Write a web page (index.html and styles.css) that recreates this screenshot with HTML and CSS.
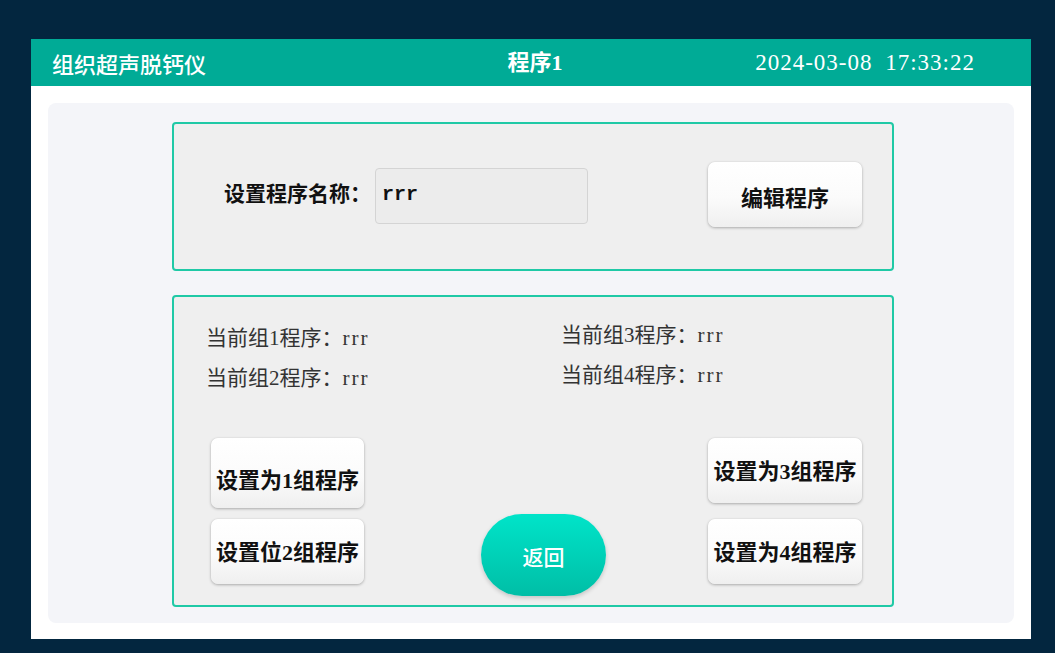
FILE: index.html
```html
<!DOCTYPE html>
<html lang="zh-CN">
<head>
<meta charset="utf-8">
<title>组织超声脱钙仪</title>
<link rel="stylesheet" href="styles.css">
</head>
<body>
<div class="card">
  <header class="topbar">
    <div class="title">组织超声脱钙仪</div>
    <div class="program">程序1</div>
    <div class="clock">2024-03-08 17:33:22</div>
  </header>
  <main class="body">
    <div class="panel">
      <section class="box box-name">
        <span class="label">设置程序名称：</span>
        <div class="input">rrr</div>
        <button class="btn btn-edit">编辑程序</button>
      </section>
      <section class="box box-groups">
        <div class="info">
          <div class="info-col">
            <div class="info-row">当前组1程序：<span class="val">rrr</span></div>
            <div class="info-row">当前组2程序：<span class="val">rrr</span></div>
          </div>
          <div class="info-col info-col-right">
            <div class="info-row">当前组3程序：<span class="val">rrr</span></div>
            <div class="info-row">当前组4程序：<span class="val">rrr</span></div>
          </div>
        </div>
        <div class="actions">
          <div class="btn-group btn-group-left">
            <button class="btn btn-set btn-tall">设置为1组程序</button>
            <button class="btn btn-set">设置位2组程序</button>
          </div>
          <button class="back">返回</button>
          <div class="btn-group btn-group-right">
            <button class="btn btn-set">设置为3组程序</button>
            <button class="btn btn-set">设置为4组程序</button>
          </div>
        </div>
      </section>
    </div>
  </main>
</div>
</body>
</html>
```
FILE: styles.css
```css
* { box-sizing: border-box; }

html, body {
  margin: 0;
  background: #03263f;
}

body {
  padding: 39px 24px 14px 31px;
  font-family: "Liberation Serif", "Noto Sans CJK SC", serif;
}

.card {
  width: 1000px;
  height: 600px;
  background: #ffffff;
  display: flex;
  flex-direction: column;
}

.topbar {
  height: 47px;
  flex: none;
  background: #00ab96;
  color: #ffffff;
  display: grid;
  grid-template-columns: 1fr auto 1fr;
  align-items: center;
  padding: 0 21px;
}

.title {
  font-family: "Noto Sans CJK SC", sans-serif;
  font-size: 22px;
  font-weight: 500;
  line-height: 1;
}

.program {
  margin-left: 8px;
  font-family: "Liberation Serif", "Noto Sans CJK SC", serif;
  font-size: 22px;
  font-weight: 700;
  line-height: 1;
}

.clock {
  justify-self: end;
  margin-right: 35px;
  font-family: "Liberation Serif", serif;
  font-size: 23px;
  letter-spacing: 1px;
  word-spacing: 6px;
  line-height: 1;
}

.body {
  flex: 1;
  padding: 17px 17px 16px 17px;
}

.panel {
  height: 100%;
  background: #f4f5f9;
  border-radius: 8px;
  padding: 19px 0 0 124px;
  display: flex;
  flex-direction: column;
  align-items: flex-start;
  gap: 24px;
}

.box {
  width: 722px;
  background: #efefef;
  border: 2px solid #1fc9a6;
  border-radius: 4px;
}

.box-name {
  height: 149px;
  display: flex;
  align-items: center;
  padding: 0 30px 0 50px;
}

.label {
  font-family: "Liberation Serif", "Noto Sans CJK SC", serif;
  font-size: 21px;
  font-weight: 700;
  line-height: 1;
  color: #111111;
  margin-bottom: 4px;
}

.input {
  width: 213px;
  height: 56px;
  margin-left: 4px;
  margin-bottom: 2px;
  background: #ececec;
  border: 1px solid #d4d4d4;
  border-radius: 4px;
  padding: 0 6px 3px;
  display: flex;
  align-items: center;
  font-family: "Liberation Mono", monospace;
  font-weight: 700;
  font-size: 20px;
  color: #111111;
}

.btn {
  border: none;
  border-radius: 7px;
  background: linear-gradient(180deg, #ffffff 0%, #fbfbfb 55%, #efefef 100%);
  box-shadow: 0 1px 3px rgba(0, 0, 0, 0.28), 0 0 1px rgba(0, 0, 0, 0.15);
  font-family: "Liberation Serif", "Noto Sans CJK SC", serif;
  font-size: 22px;
  font-weight: 700;
  color: #111111;
  padding: 0 0 3px;
  display: flex;
  align-items: center;
  justify-content: center;
  white-space: nowrap;
}

.btn-edit {
  margin-left: auto;
  width: 154px;
  height: 65px;
  margin-top: -4px;
  padding: 3px 0 0;
}

.box-groups {
  height: 312px;
  display: flex;
  flex-direction: column;
}

.info {
  display: flex;
  padding: 21px 0 0 32px;
  font-family: "Liberation Serif", "Noto Sans CJK SC", serif;
  font-size: 21px;
  color: #333333;
}

.info-col {
  flex: none;
  width: 355px;
}

.info-col-right {
  flex: 1;
  width: auto;
  margin-top: -3px;
}

.info-row {
  line-height: 40px;
  white-space: nowrap;
}

.val {
  letter-spacing: 2px;
}

.actions {
  margin-top: auto;
  display: flex;
  justify-content: space-between;
  align-items: flex-end;
  padding: 0 30px 9px 37px;
}

.btn-group {
  display: flex;
  flex-direction: column;
  margin-bottom: 12px;
}

.btn-group-left {
  width: 153px;
  gap: 11px;
}

.btn-group-right {
  width: 154px;
  gap: 16px;
}

.btn-set {
  width: 100%;
  height: 65px;
}

.btn-tall {
  height: 70px;
  padding: 9px 0 0;
}

.back {
  margin-left: 15px;
  width: 125px;
  height: 82px;
  border: none;
  border-radius: 41px;
  background: linear-gradient(180deg, #00e4c9 0%, #00bea6 100%);
  box-shadow: 0 2px 4px rgba(0, 0, 0, 0.18);
  color: #ffffff;
  font-family: "Noto Sans CJK SC", sans-serif;
  font-size: 21px;
  font-weight: 500;
  padding: 2px 0 0;
}
```
